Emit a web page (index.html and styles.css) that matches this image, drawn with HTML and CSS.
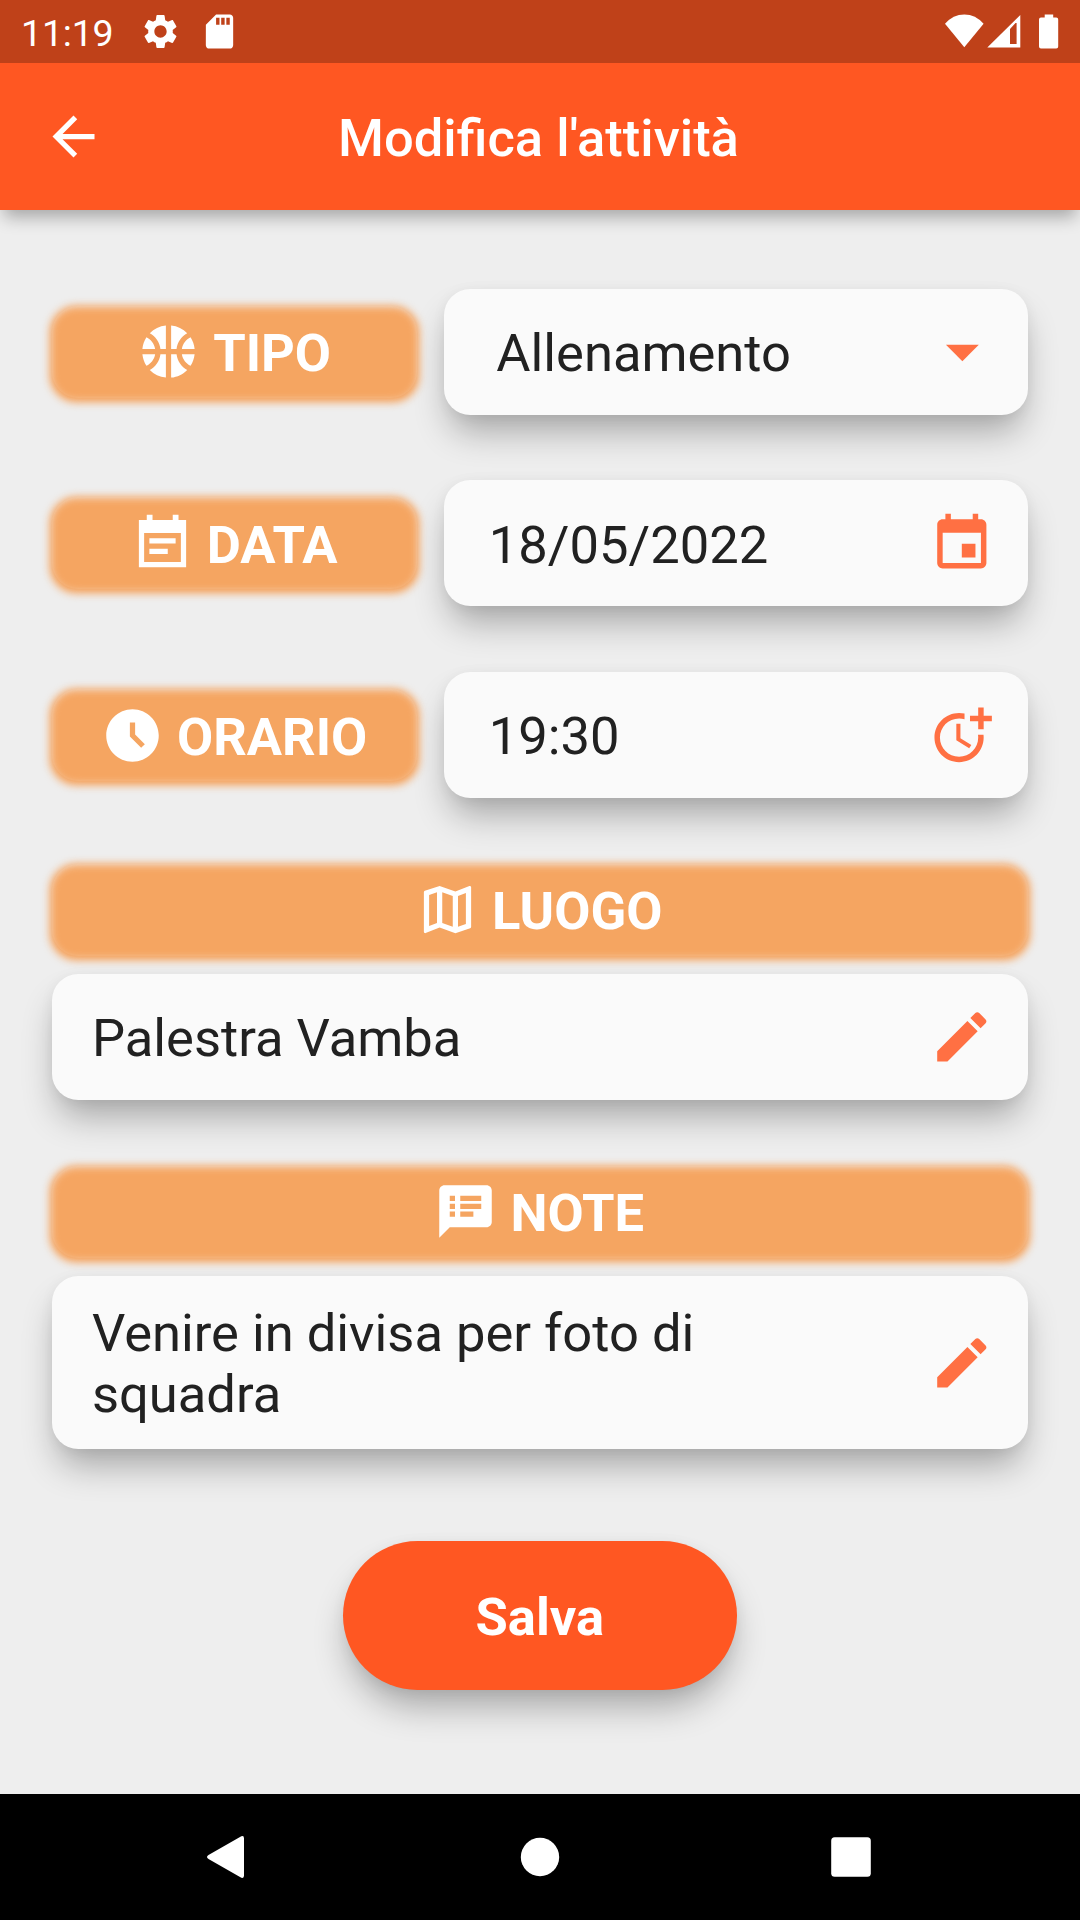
FILE: index.html
```
<!DOCTYPE html>
<html lang="it">
<head>
<meta charset="utf-8">
<title>Modifica l'attività</title>
<link rel="stylesheet" href="styles.css">
</head>
<body>
<div class="screen">
  <header class="status">
    <span class="clock">11:19</span>
    <svg class="gear" viewBox="0 0 24 24"><path d="M19.14 12.94c.04-.3.06-.61.06-.94 0-.32-.02-.64-.07-.94l2.03-1.58c.18-.14.23-.41.12-.61l-1.92-3.32c-.12-.22-.37-.29-.59-.22l-2.39.96c-.5-.38-1.03-.7-1.62-.94l-.36-2.54c-.04-.24-.24-.41-.48-.41h-3.84c-.24 0-.43.17-.47.41l-.36 2.54c-.59.24-1.13.57-1.62.94l-2.39-.96c-.22-.08-.47 0-.59.22L2.74 8.87c-.12.21-.08.47.12.61l2.03 1.58c-.05.3-.09.63-.09.94s.02.64.07.94l-2.03 1.58c-.18.14-.23.41-.12.61l1.92 3.32c.12.22.37.29.59.22l2.39-.96c.5.38 1.03.7 1.62.94l.36 2.54c.05.24.24.41.48.41h3.84c.24 0 .44-.17.47-.41l.36-2.54c.59-.24 1.13-.56 1.62-.94l2.39.96c.22.08.47 0 .59-.22l1.92-3.32c.12-.22.07-.47-.12-.61l-2.01-1.58zM12 15.6c-1.98 0-3.6-1.62-3.6-3.6s1.62-3.6 3.6-3.6 3.6 1.62 3.6 3.6-1.62 3.6-3.6 3.6z"/></svg>
    <svg class="sd" viewBox="0 0 24 24"><path d="M18 2h-8L4.02 8 4 20c0 1.100.9 2 2 2h12c1.100 0 2-.9 2-2V4c0-1.100-.9-2-2-2zm-6 6h-2V4h2v4zm3 0h-2V4h2v4zm3 0h-2V4h2v4z"/></svg>
    <svg class="signals" viewBox="0 0 116 36">
      <path d="M0 9.800Q8 .5 19.300 .5T38.600 9.800L19.300 33.300Z"/>
      <path fill-rule="evenodd" d="M42.300 33.500 75.300 1V33.500ZM65 15V30H71.600V9H70.500Z"/>
      <path d="M99.700 .5h8.500v3h3q2 0 2 2V32.500q0 2-2 2H96q-2 0-2-2V5.500q0-2 2-2h3.700Z"/>
    </svg>
  </header>
  <div class="appbar">
    <svg class="back" viewBox="0 0 24 24"><path d="M20 11H7.830l5.590-5.590L12 4l-8 8 8 8 1.410-1.410L7.830 13H20v-2z"/></svg>
    <h1 class="title">Modifica l'attività</h1>
  </div>
  <main class="form">
    <div class="row">
      <div class="label"><svg class="icon" viewBox="0 0 24 24"><path d="M17.090 11h4.860c-.16-1.610-.71-3.110-1.540-4.400-1.730.83-2.990 2.450-3.320 4.400zM6.910 11c-.33-1.950-1.590-3.570-3.320-4.400-.83 1.290-1.380 2.790-1.540 4.400h4.860zM15.070 11c.32-2.590 1.880-4.790 4.060-6-1.600-1.630-3.740-2.710-6.130-2.950V11h2.070zM8.930 11H11V2.050C8.610 2.290 6.460 3.370 4.870 5c2.180 1.210 3.740 3.410 4.060 6zM15.070 13H13v8.950c2.390-.24 4.540-1.320 6.130-2.950-2.180-1.210-3.740-3.410-4.060-6zM3.590 17.400c1.730-.83 2.990-2.450 3.320-4.400H2.050c.16 1.610.71 3.110 1.540 4.400zM17.090 13c.33 1.950 1.590 3.570 3.320 4.400.83-1.290 1.380-2.790 1.540-4.400h-4.860zM8.930 13c-.32 2.590-1.880 4.790-4.060 6 1.600 1.630 3.740 2.710 6.130 2.950V13H8.930z"/></svg><span>TIPO</span></div>
      <div class="field select"><span>Allenamento</span><svg class="icon" viewBox="0 0 24 24"><path d="M7 10l5 5 5-5z"/></svg></div>
    </div>
    <div class="row">
      <div class="label"><svg class="icon" viewBox="0 0 24 24"><path fill-rule="evenodd" d="M3 3H6V1H8.200V3H15.900V1H18.100V3H21V21H3ZM5 8V19H19V8ZM7 10H17V12H7ZM7 14H14V16H7Z"/></svg><span>DATA</span></div>
      <div class="field"><span>18/05/2022</span><svg class="icon" viewBox="0 0 24 24"><path d="M17 12h-5v5h5v-5zM16 1v2H8V1H6v2H5c-1.110 0-1.990.9-1.990 2L3 19c0 1.100.89 2 2 2h14c1.100 0 2-.9 2-2V5c0-1.100-.9-2-2-2h-1V1h-2zm3 18H5V8h14v11z"/></svg></div>
    </div>
    <div class="row">
      <div class="label"><svg class="icon" viewBox="0 0 24 24"><path d="M12 2C6.500 2 2 6.500 2 12s4.500 10 10 10 10-4.500 10-10S17.500 2 12 2zm3.300 14.700L11 12.400V7h2v4.600l3.700 3.700-1.400 1.400z"/></svg><span>ORARIO</span></div>
      <div class="field"><span>19:30</span><svg class="icon" viewBox="0 0 24 24"><path d="M10 8v6l4.700 2.900.8-1.200-4-2.400V8z"/><path d="M17.920 12c.05.330.08.660.08 1 0 3.900-3.100 7-7 7s-7-3.100-7-7 3.100-7 7-7c.7 0 1.370.1 2 .29V4.230C12.360 4.080 11.690 4 11 4c-5 0-9 4-9 9s4 9 9 9 9-4 9-9c0-.34-.02-.67-.06-1h-2.020z"/><path d="M20 5V2h-2v3h-3v2h3v3h2V7h3V5z"/></svg></div>
    </div>
    <section class="group">
      <div class="label"><svg class="icon" viewBox="0 0 24 24"><path d="M20.500 3l-.16.030L15 5.100 9 3 3.360 4.900c-.21.070-.36.250-.36.480V20.500c0 .28.220.5.500.5l.16-.03L9 18.900l6 2.100 5.640-1.900c.21-.07.36-.25.36-.48V3.500c0-.28-.22-.5-.5-.5zM10 5.470l4 1.400v11.660l-4-1.400V5.470zm-5 .99l3-1.010v11.700l-3 1.160V6.460zm14 11.080l-3 1.010V6.860l3-1.160v11.840z"/></svg><span>LUOGO</span></div>
      <div class="field wide"><span>Palestra Vamba</span><svg class="icon" viewBox="0 0 24 24"><path d="M3 17.250V21h3.750L17.810 9.940l-3.750-3.750L3 17.250zM20.710 7.040c.39-.39.39-1.020 0-1.410l-2.340-2.340c-.39-.39-1.020-.39-1.410 0l-1.830 1.830 3.750 3.750 1.830-1.830z"/></svg></div>
    </section>
    <section class="group">
      <div class="label"><svg class="icon" viewBox="0 0 24 24"><path d="M20 2H4c-1.100 0-1.990.9-1.990 2L2 22l4-4h14c1.100 0 2-.9 2-2V4c0-1.100-.9-2-2-2zM8 14H6v-2h2v2zm0-3H6V9h2v2zm0-3H6V6h2v2zm7 6h-5v-2h5v2zm3-3h-8V9h8v2zm0-3h-8V6h8v2z"/></svg><span>NOTE</span></div>
      <div class="field wide"><span>Venire in divisa per foto di squadra</span><svg class="icon" viewBox="0 0 24 24"><path d="M3 17.250V21h3.750L17.810 9.940l-3.750-3.750L3 17.250zM20.710 7.040c.39-.39.39-1.020 0-1.410l-2.340-2.340c-.39-.39-1.020-.39-1.410 0l-1.830 1.830 3.750 3.750 1.830-1.830z"/></svg></div>
    </section>
    <button class="save">Salva</button>
  </main>
  <nav class="navbar">
    <svg viewBox="0 0 48 48"><path d="M6.500 22 38 4Q42 1.500 42 5.500V42.500Q42 46.500 38 44L6.500 26Q3.500 24 6.500 22Z"/></svg>
    <svg viewBox="0 0 48 48"><circle cx="24" cy="24" r="19.200"/></svg>
    <svg viewBox="0 0 48 48"><rect x="4.200" y="4.200" width="39.600" height="39.600" rx="3.500"/></svg>
  </nav>
</div>
</body>
</html>
```

FILE: styles.css
```
* { box-sizing: border-box; }
body { margin: 0; font-family: Roboto, sans-serif; }
svg { display: block; fill: currentColor; flex: none; }
.screen {
  width: 1080px;
  height: 1920px;
  display: flex;
  flex-direction: column;
  background: #eeeeee;
  overflow: hidden;
}
.status {
  position: relative;
  z-index: 2;
  height: 63px;
  display: flex;
  align-items: center;
  padding: 0 19px 0 21px;
  background: #bf4119;
  color: #fff;
}
.clock { width: 119px; font-size: 37.500px; line-height: 44px; padding-top: 3px; letter-spacing: -0.200px; }
.gear { width: 41px; height: 41px; }
.sd { width: 41px; height: 41px; margin-left: 17.500px; }
.signals { width: 116px; height: 36px; margin-left: auto; }
.appbar {
  position: relative;
  z-index: 1;
  height: 147px;
  display: flex;
  align-items: center;
  padding: 0 42px;
  background: #ff5722;
  color: #fff;
  box-shadow: 0 11px 16px -4px rgba(0,0,0,.3);
}
.back { width: 63px; height: 63px; }
.title { flex: 1; margin: 0 66px 0 0; padding-top: 3px; text-align: center; font-size: 52.500px; font-weight: 500; line-height: 62px; }
.form { flex: 1; display: flex; flex-direction: column; padding: 78.750px 52.500px 0 52.200px; }
.row {
  display: grid;
  grid-template-columns: 365px 583.700px;
  justify-content: space-between;
  align-items: center;
  height: 126px;
  margin-bottom: 65.700px;
}
.label {
  position: relative;
  isolation: isolate;
  display: flex;
  justify-content: center;
  align-items: center;
  gap: 13px;
  height: 92px;
  color: #fff;
  font-size: 52.500px;
  font-weight: 700;
  line-height: 62px;
  padding: 0 1.200px 0 0;
}
/* soft orange glow, with a faint light tint over it */
.label::before,
.label::after {
  content: "";
  position: absolute;
  z-index: -1;
  border-radius: 26.250px;
}
.label::before {
  inset: 0 -2px -4px;
  background: #f59d52;
  filter: blur(4px);
}
.label::after {
  inset: 0;
  background: rgba(255,255,255,.09);
}
.label span { padding-top: 3px; }
.icon { width: 63px; height: 63px; }
.field {
  display: flex;
  align-items: center;
  justify-content: space-between;
  min-height: 126px;
  padding: 23px 32.700px 23px 45px;
  border-radius: 26.250px;
  background: #fafafa;
  color: #212121;
  font-size: 52.500px;
  line-height: 61.500px;
}
.field, .save {
  box-shadow: 0 22px 35px -6px rgba(0,0,0,.3), 0 2px 14px rgba(0,0,0,.05);
}
.field span { padding-top: 4px; }
.field .icon { width: 65.600px; height: 65.600px; color: #ff7043; }
.field.select { padding-left: 52.500px; padding-right: 26px; }
.select .icon { width: 78.750px; height: 78.750px; }
.field.wide { padding-left: 39.700px; }
.wide span { width: 640px; }
.group .label { margin-bottom: 18px; }
.group { margin-bottom: 66px; }
.save {
  align-self: center;
  width: 394px;
  height: 149.500px;
  margin-top: 26px;
  padding: 3px 0 0;
  border: 0;
  border-radius: 75px;
  background: #ff5722;
  color: #fff;
  font: 700 52.500px/62px Roboto, sans-serif;
}
.navbar {
  height: 126px;
  display: flex;
  justify-content: space-between;
  align-items: center;
  padding: 0 205px 0 202px;
  background: #000;
  color: #fff;
}
.navbar svg { width: 48px; height: 48px; }
.navbar svg:nth-child(2) { margin-left: 2px; }
```
